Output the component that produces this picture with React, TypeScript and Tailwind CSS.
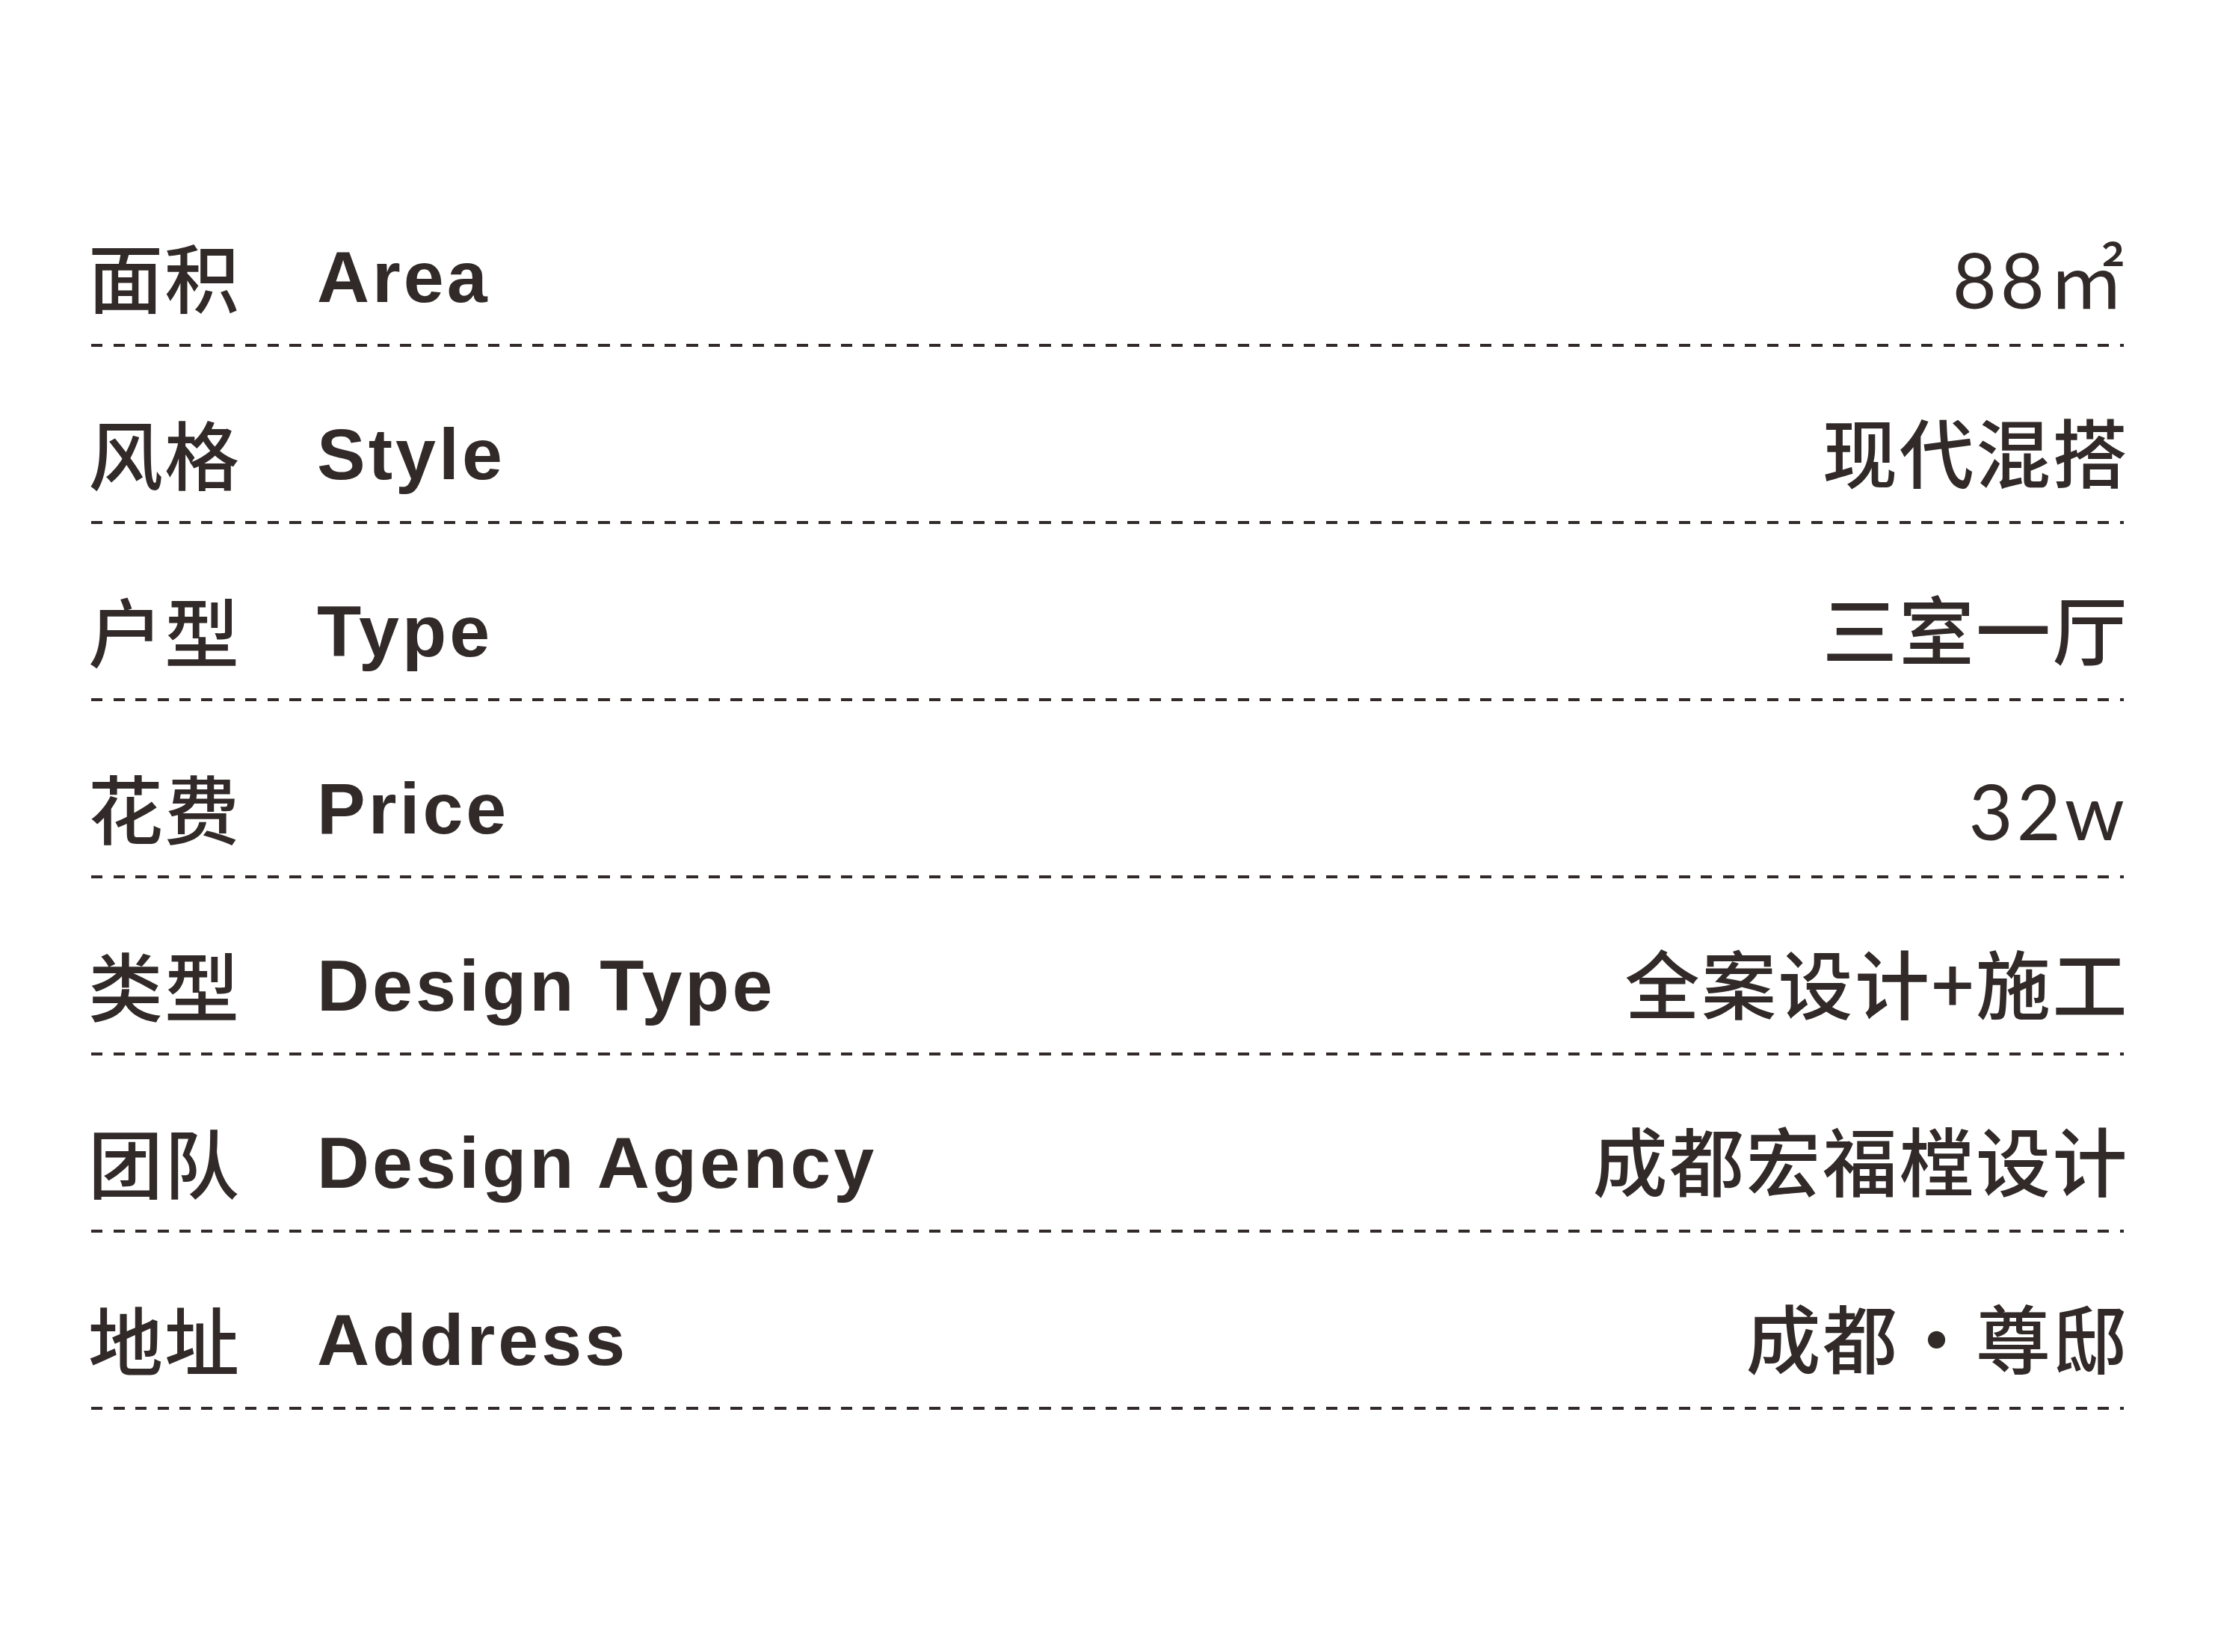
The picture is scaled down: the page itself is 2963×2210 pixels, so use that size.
const rows = [
  { zh: '面积', en: 'Area', value: '88㎡', num: true },
  { zh: '风格', en: 'Style', value: '现代混搭' },
  { zh: '户型', en: 'Type', value: '三室一厅' },
  { zh: '花费', en: 'Price', value: '32w', num: true },
  { zh: '类型', en: 'Design Type', value: '全案设计+施工' },
  { zh: '团队', en: 'Design Agency', value: '成都宏福樘设计' },
  { zh: '地址', en: 'Address', value: '成都・尊邸' },
];

const InfoRow = ({ zh, en, value, num }: { zh: string; en: string; value: string; num?: boolean }) => {
  return (
    <div>
      <div className="flex h-[233px] items-end justify-between pb-[45px]">
        <div className="flex items-end">
          <span className="-ml-[4px] mb-[-3px] w-[306px] shrink-0 font-['Noto_Sans_CJK_SC',sans-serif] text-[100px] leading-none font-medium tracking-[2px]">
            {zh}
          </span>
          <span className="mb-[-4px] font-['Liberation_Sans',Arial,sans-serif] text-[97px] leading-none font-bold tracking-[4px]">
            {en}
          </span>
        </div>
        {num ? (
          <span className="-mr-[6px] mb-[-10px] font-['Lato','Noto_Sans_CJK_SC',sans-serif] text-[102px] leading-none tracking-[5px]">
            {value}
          </span>
        ) : (
          <span className="-mr-[7px] font-['Noto_Sans_CJK_SC',sans-serif] text-[100px] leading-none font-medium tracking-[2.5px]">
            {value}
          </span>
        )}
      </div>
      <div className="h-[4px] bg-[image:repeating-linear-gradient(to_right,#312a29_0px,#312a29_15px,transparent_15px,transparent_29.5px)]" />
    </div>
  );
};

export default function App() {
  return (
    <div className="min-h-[2210px] w-full bg-white px-[122px] pt-[227px] text-[#312a29]">
      {rows.map((row) => (
        <InfoRow key={row.zh} {...row} />
      ))}
    </div>
  );
}
